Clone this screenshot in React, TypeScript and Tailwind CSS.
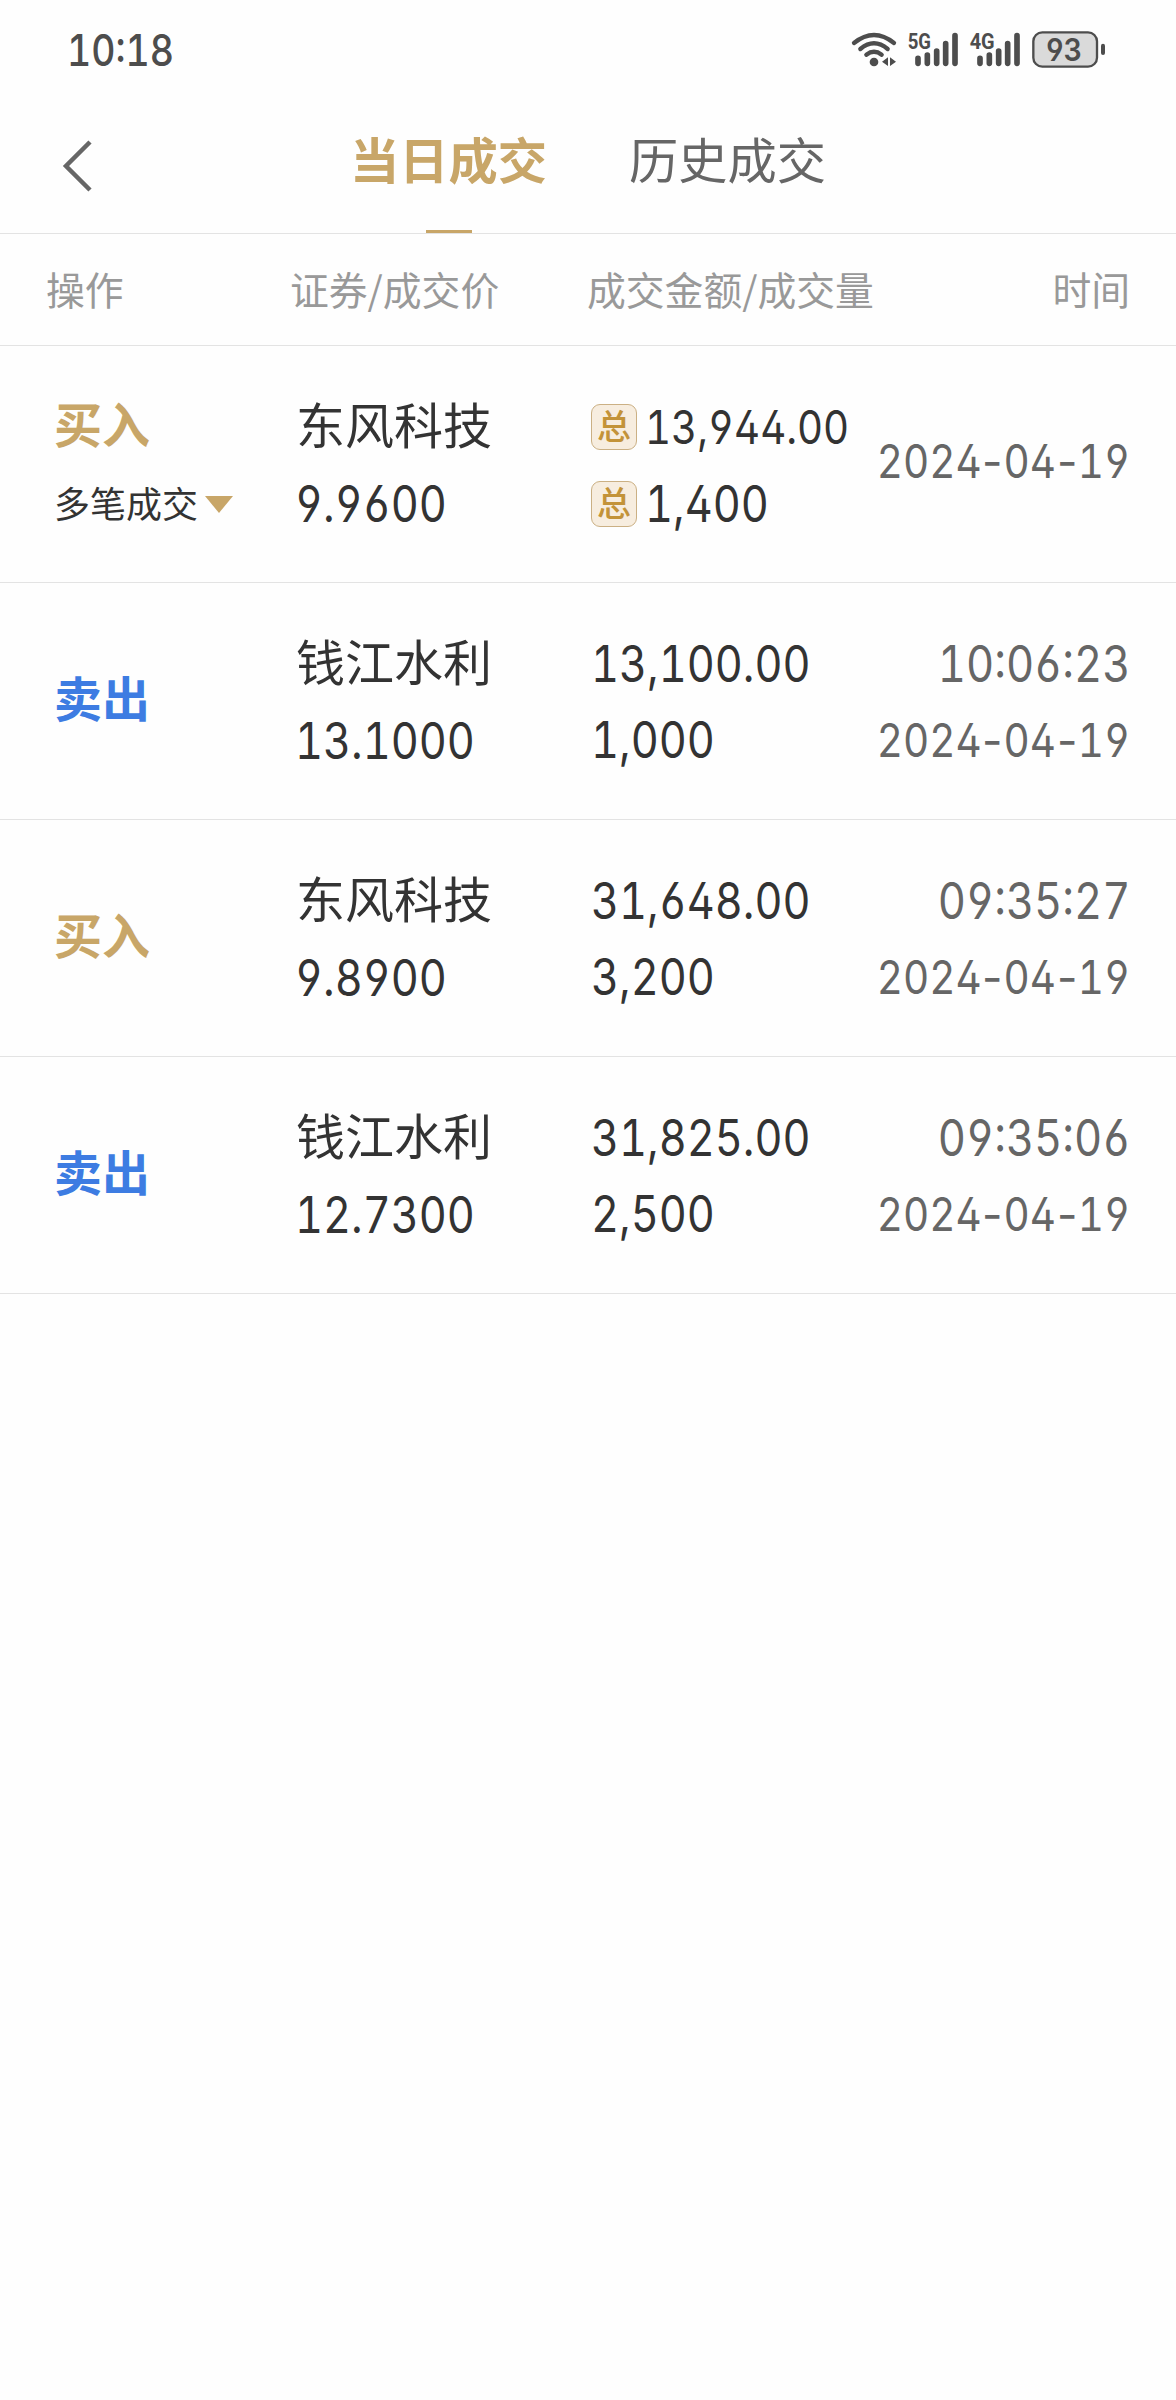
import React from "react";

type Trade = {
  side: "买入" | "卖出";
  multi?: boolean;
  name: string;
  price: string;
  amount: string;
  volume: string;
  time?: string;
  date: string;
};

const trades: Trade[] = [
  { side: "买入", multi: true, name: "东风科技", price: "9.9600", amount: "13,944.00", volume: "1,400", date: "2024-04-19" },
  { side: "卖出", name: "钱江水利", price: "13.1000", amount: "13,100.00", volume: "1,000", time: "10:06:23", date: "2024-04-19" },
  { side: "买入", name: "东风科技", price: "9.8900", amount: "31,648.00", volume: "3,200", time: "09:35:27", date: "2024-04-19" },
  { side: "卖出", name: "钱江水利", price: "12.7300", amount: "31,825.00", volume: "2,500", time: "09:35:06", date: "2024-04-19" },
];

const digits =
  "inline-block whitespace-nowrap font-['Inter','Noto_Sans_CJK_SC',sans-serif] [font-feature-settings:'tnum','cv02','cv03','cv04']";

function Num({ children, className = "" }: { children: string; className?: string }) {
  return <span className={`${digits} origin-left scale-x-[.865] text-[50px] ${className}`}>{children}</span>;
}

function StatusBar() {
  return (
    <div className="flex h-[100px] items-start justify-between pl-[67px] pr-[56px] text-[#4d4d4d]">
      <span className={`${digits} mt-[20px] origin-left scale-x-[.86] text-[43.5px] font-medium leading-[60px]`}>10:18</span>
      <svg className="mt-[20px] h-[60px] w-[280px]" viewBox="0 0 840 180" fill="none" stroke="currentColor" strokeLinecap="round">
        <g strokeWidth="13">
          <path d="M42 69 Q102 21 162 69" />
          <path d="M61 87 Q102 53 143 87" />
          <path d="M79 104 Q102 87 125 104" />
        </g>
        <circle cx="102" cy="126" r="13" fill="currentColor" stroke="none" />
        <path d="M144 112V138L126 125ZM150 112V138L168 125Z" fill="currentColor" stroke="none" />
        <g strokeWidth="17">
          <path d="M234 115V130M262 105V130M290 93V130M317 71V130M345 47V130" />
          <path d="M420 115V130M448 105V130M476 93V130M503 71V130M531 47V130" />
        </g>
        <g fill="currentColor" stroke="none" className="font-['Roboto',sans-serif] font-bold" fontSize="67">
          <text x="203" y="88" textLength="70" lengthAdjust="spacingAndGlyphs">5G</text>
          <text x="389" y="88" textLength="75" lengthAdjust="spacingAndGlyphs">4G</text>
        </g>
        <rect x="580" y="37" width="191" height="103" rx="27" fill="#dadada" strokeWidth="7" />
        <path d="M789 77V99" strokeWidth="12" />
        <text
          x="672"
          y="122"
          textAnchor="middle"
          fontSize="94"
          textLength="106"
          lengthAdjust="spacingAndGlyphs"
          fill="currentColor"
          stroke="none"
          className="font-['Inter',sans-serif] font-semibold [font-feature-settings:'cv03','cv04']"
        >
          93
        </text>
      </svg>
    </div>
  );
}

function NavBar() {
  return (
    <div className="relative flex h-[134px] justify-center gap-[82px] border-b border-[#e3e3e3] text-[49.25px]">
      <svg className="absolute left-[60px] top-[38px] h-[56px] w-[34px]" viewBox="0 0 34 56" fill="none" stroke="#666" strokeWidth="4.5">
        <path d="M30 4 L6 28 L30 52" />
      </svg>
      <div className="flex flex-col items-center justify-between font-bold text-[#c8a668]">
        <span className="pt-[22px] leading-[72px]">当日成交</span>
        <span className="h-[3px] w-[46px] bg-[#c8a668]" />
      </div>
      <span className="pt-[22px] leading-[72px] text-[#666]">历史成交</span>
    </div>
  );
}

const columns = "grid grid-cols-[244px_297px_1fr_auto] pl-[46px] pr-[46px]";

function TotalBadge() {
  return (
    <span className="mr-[8px] flex size-[46px] shrink-0 items-center justify-center rounded-[9px] border border-[#cbb084] bg-[#f7eddf] text-[34px] font-medium leading-none text-[#c39339]">
      <span className="-mt-[3px]">总</span>
    </span>
  );
}

function DateText({ value }: { value: string }) {
  return (
    <span className={`${digits} origin-right scale-x-[.87] text-[46.5px]`}>
      {value.split("-").map((part, i) => (
        <React.Fragment key={i}>
          {i > 0 && (
            <span className="inline-block w-[25px] text-center [font-feature-settings:normal]">
              <span className="inline-block scale-x-110">-</span>
            </span>
          )}
          {part}
        </React.Fragment>
      ))}
    </span>
  );
}

function Row({ trade }: { trade: Trade }) {
  const buy = trade.side === "买入";
  return (
    <div className={`${columns} h-[237px] items-center border-b border-[#e3e3e3] text-[49px] leading-[76px] text-[#333]`}>
      <div className="pl-[8px]">
        <div
          className={`text-[48px] font-bold leading-[68px] ${trade.multi ? "mb-[8px]" : "mb-[11px]"} ${
            buy ? "text-[#c8a668]" : "text-[#3d7ce2]"
          }`}
        >
          {trade.side}
        </div>
        {trade.multi && (
          <div className="flex items-center text-[36px]">
            多笔成交
            <svg className="ml-[7px] mt-[4px] h-[17px] w-[28px]" viewBox="0 0 28 17" fill="#c8a668">
              <path d="M0 0H28L14 17Z" />
            </svg>
          </div>
        )}
      </div>
      <div className="flex flex-col pl-[6px]">
        <span className="mb-[7px] leading-[72px]">{trade.name}</span>
        <Num className="ml-[-1px]">{trade.price}</Num>
      </div>
      <div className="flex w-0 flex-col pl-[4px] pt-[2px]">
        <div className="flex items-center">
          {trade.multi && <TotalBadge />}
          <Num className={trade.multi ? "text-[46.5px]!" : ""}>{trade.amount}</Num>
        </div>
        <div className={`flex items-center ${trade.multi ? "pt-[1px]" : ""}`}>
          {trade.multi && <TotalBadge />}
          <Num>{trade.volume}</Num>
        </div>
      </div>
      <div className={`flex flex-col items-end text-[#666] ${trade.time ? "pt-[2px]" : "pb-[6px]"}`}>
        {trade.time && <Num className="origin-right! scale-x-[.87]!">{trade.time}</Num>}
        <DateText value={trade.date} />
      </div>
    </div>
  );
}

export default function App() {
  return (
    <div lang="zh-CN" className="min-h-[2400px] w-[1176px] overflow-hidden bg-[#fefefe] font-['Noto_Sans_CJK_SC',sans-serif]">
      <StatusBar />
      <NavBar />
      <div className={`${columns} h-[112px] items-center border-b border-[#e3e3e3] pb-[3px] text-[38.8px] text-[#999]`}>
        <span>操作</span>
        <span>证券/成交价</span>
        <span>成交金额/成交量</span>
        <span>时间</span>
      </div>
      {trades.map((trade, i) => (
        <Row key={i} trade={trade} />
      ))}
    </div>
  );
}
